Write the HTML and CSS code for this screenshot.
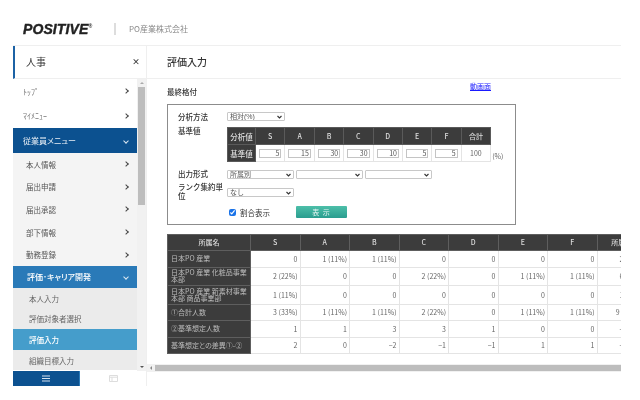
FILE: index.html
```html
<!DOCTYPE html>
<html lang="ja">
<head>
  <meta charset="UTF-8">
  <title>評価入力</title>
  <link rel="stylesheet" href="styles.css">
</head>
<body>
  <div class="page">
    <header class="topbar">
      <span class="logo">POSITIVE<sup>®</sup></span>
      <span class="company">PO産業株式会社</span>
    </header>

    <div class="main">
      <aside class="sidebar">
        <div class="side-title"><span>人事</span><span class="close">×</span></div>
        <div class="side-body">
          <ul class="menu">
            <li class="item top">ﾄｯﾌﾟ<i class="arrow"></i></li>
            <li class="item top">ﾏｲﾒﾆｭｰ<i class="arrow"></i></li>
            <li class="item head">従業員メニュー<i class="arrow down"></i></li>
            <li class="item sub">本人情報<i class="arrow"></i></li>
            <li class="item sub">届出申請<i class="arrow"></i></li>
            <li class="item sub">届出承認<i class="arrow"></i></li>
            <li class="item sub">部下情報<i class="arrow"></i></li>
            <li class="item sub">勤務登録<i class="arrow"></i></li>
            <li class="item head2">評価･キャリア開発<i class="arrow down"></i></li>
            <li class="item leaf">本人入力</li>
            <li class="item leaf">評価対象者選択</li>
            <li class="item leaf current">評価入力</li>
            <li class="item leaf">組織目標入力</li>
          </ul>
          <div class="vscroll">
            <span class="vup"></span>
            <span class="vthumb"></span>
            <span class="vdown"></span>
          </div>
        </div>
        <div class="side-tabs">
          <div class="tab active">
            <svg width="8" height="7" viewBox="0 0 8 7"><path d="M0 1h8M0 3.5h8M0 6h8" stroke="#d5e2ee" stroke-width="1.2"/></svg>
          </div>
          <div class="tab">
            <svg width="9" height="7" viewBox="0 0 9 7"><path d="M.5.5h8v6h-8zM.5 2.2h8M3 2.2v4.3" fill="none" stroke="#ddd" stroke-width="1"/></svg>
          </div>
        </div>
      </aside>

      <section class="content">
        <h2 class="page-title">評価入力</h2>
        <div class="scroll-area">
          <div class="sub-head">
            <span class="grade-title">最終格付</span>
            <a class="video-link" href="#">動画面</a>
          </div>

          <div class="filter-box">
            <div class="field">
              <label>分析方法</label>
              <select class="sel-short"><option>相対(%)</option></select>
            </div>
            <div class="field base">
              <label>基準値</label>
              <div class="base-wrap">
                <table class="base-table">
                  <tr>
                    <th class="name">分析値</th><th>S</th><th>A</th><th>B</th><th>C</th><th>D</th><th>E</th><th>F</th><th>合計</th>
                  </tr>
                  <tr>
                    <th class="name">基準値</th>
                    <td><input value="5"></td>
                    <td><input value="15"></td>
                    <td><input value="30"></td>
                    <td><input value="30"></td>
                    <td><input value="10"></td>
                    <td><input value="5"></td>
                    <td><input value="5"></td>
                    <td class="sum">100</td>
                  </tr>
                </table>
                <span class="unit">(%)</span>
              </div>
            </div>
            <div class="field output">
              <label>出力形式</label>
              <select class="sel-long"><option>所属別</option></select>
              <select class="sel-long"><option></option></select>
              <select class="sel-long"><option></option></select>
            </div>
            <div class="field rank">
              <label>ランク集約単位</label>
              <select class="sel-long"><option>なし</option></select>
            </div>
            <div class="field actions">
              <label class="check"><input type="checkbox" checked>割合表示</label>
              <button class="show-btn">表 示</button>
            </div>
          </div>

          <div class="result-wrap">
            <table class="result">
              <colgroup>
                <col class="col-name"><col><col><col><col><col><col><col><col>
              </colgroup>
              <tr class="r-head">
                <th>所属名</th><th>S</th><th>A</th><th>B</th><th>C</th><th>D</th><th>E</th><th>F</th><th>所属計</th>
              </tr>
              <tr class="r1">
                <th>日本PO 産業</th><td>0</td><td>1 (11%)</td><td>1 (11%)</td><td>0</td><td>0</td><td>0</td><td>0</td><td>2 (22%)</td>
              </tr>
              <tr class="r2">
                <th>日本PO 産業 化粧品事業本部</th><td>2 (22%)</td><td>0</td><td>0</td><td>2 (22%)</td><td>0</td><td>1 (11%)</td><td>1 (11%)</td><td>6 (67%)</td>
              </tr>
              <tr class="r2">
                <th>日本PO 産業 新素材事業本部 商品事業部</th><td>1 (11%)</td><td>0</td><td>0</td><td>0</td><td>0</td><td>0</td><td>0</td><td>1 (11%)</td>
              </tr>
              <tr class="r1">
                <th>①合計人数</th><td>3 (33%)</td><td>1 (11%)</td><td>1 (11%)</td><td>2 (22%)</td><td>0</td><td>1 (11%)</td><td>1 (11%)</td><td>9 (100%)</td>
              </tr>
              <tr class="r1">
                <th>②基準想定人数</th><td>1</td><td>1</td><td>3</td><td>3</td><td>1</td><td>0</td><td>0</td><td class="dash">−</td>
              </tr>
              <tr class="r1">
                <th>基準想定との差異①-②</th><td>2</td><td>0</td><td>−2</td><td>−1</td><td>−1</td><td>1</td><td>1</td><td class="dash">−</td>
              </tr>
            </table>
          </div>
        </div>
        <div class="hscroll">
          <span class="hleft"></span>
          <span class="hthumb"></span>
        </div>
      </section>
    </div>
  </div>
</body>
</html>
```

FILE: styles.css
```css
* {
  box-sizing: border-box;
}

html, body {
  height: 100%;
}

body {
  margin: 0;
  background-color: #fff;
  color: #444;
  font-family: "Noto Sans CJK JP", "Liberation Sans", sans-serif;
  font-size: 8px;
  font-feature-settings: "palt";
  overflow: hidden;
}

.page {
  width: 608px;
  margin-left: 13px;
  filter: blur(0.3px);
}

/* Top bar */
.topbar {
  height: 45px;
  padding: 21px 0 0 10px;
  display: flex;
  align-items: flex-start;
}

.logo {
  width: 91px;
  height: 16px;
  font-family: "Liberation Sans", sans-serif;
  font-size: 14px;
  line-height: 16px;
  font-weight: bold;
  font-style: italic;
  color: #222;
  letter-spacing: 0.1px;
  -webkit-text-stroke: 0.4px #222;
}

.logo sup {
  font-size: 5px;
  line-height: 0;
  vertical-align: 6px;
  -webkit-text-stroke: 0;
}

.company {
  margin-top: 2px;
  padding-left: 13px;
  height: 12px;
  border-left: 2px solid #ddd;
  font-size: 8px;
  line-height: 12px;
  color: #888;
  font-feature-settings: normal;
}

.main {
  display: flex;
  height: 341px;
  border-top: 1px solid #efefef;
}

/* Sidebar */
.sidebar {
  width: 134px;
  flex-shrink: 0;
  border-right: 1px solid #efefef;
  display: flex;
  flex-direction: column;
}

.side-title {
  height: 33px;
  flex-shrink: 0;
  border-left: 2px solid #1c62a5;
  border-bottom: 1px solid #efefef;
  padding: 0 6px 1px 11px;
  display: flex;
  justify-content: space-between;
  align-items: center;
  font-size: 10px;
  color: #333;
  font-feature-settings: normal;
}

.close {
  font-size: 8px;
  font-weight: bold;
}

.side-body {
  height: 292px;
  display: flex;
}

.menu {
  list-style: none;
  margin: 0;
  padding: 0;
  width: 125px;
  overflow: hidden;
}

.item {
  display: flex;
  justify-content: space-between;
  align-items: center;
  padding: 0 9px 0 10px;
  font-size: 7.5px;
  color: #555;
}

.arrow {
  width: 4px;
  height: 4px;
  border-top: 1.3px solid #444;
  border-right: 1.3px solid #444;
  transform: rotate(45deg);
}

.arrow.down {
  border-color: #dde8f2;
  transform: rotate(135deg);
}

.top {
  height: 24.5px;
  font-size: 8px;
  font-feature-settings: normal;
  color: #777;
}

.head {
  height: 25px;
  background-color: #0c5190;
  color: #e8eef5;
  font-size: 8px;
}

.sub {
  height: 22.6px;
  background-color: #f4f4f4;
  padding-left: 13px;
}

.head2 {
  height: 22px;
  background-color: #2a7ab8;
  padding-left: 14px;
  color: #fff;
  font-size: 8px;
  font-weight: 500;
}

.leaf {
  height: 20.6px;
  background-color: #ebebeb;
  padding-left: 16px;
  color: #666;
}

.leaf.current {
  background-color: #459dcb;
  color: #fff;
  font-weight: 500;
}

.vscroll {
  width: 9px;
  background-color: #f1f1f1;
  display: flex;
  flex-direction: column;
  align-items: center;
}

.vup, .vdown {
  width: 0;
  height: 0;
  flex-shrink: 0;
  border-left: 2px solid transparent;
  border-right: 2px solid transparent;
}

.vup {
  margin: 3px 0;
  border-bottom: 2px solid #aaa;
}

.vthumb {
  width: 7px;
  height: 118px;
  background-color: #bdbdbd;
}

.vdown {
  margin-top: auto;
  margin-bottom: 3px;
  border-top: 2px solid #555;
}

.side-tabs {
  height: 15px;
  display: flex;
}

.tab {
  flex: 1;
  display: flex;
  justify-content: center;
  align-items: center;
}

.tab.active {
  background-color: #0c5190;
  border-right: 1px solid #2a7ab8;
}

/* Content */
.content {
  flex: 1;
  min-width: 0;
  display: flex;
  flex-direction: column;
}

.page-title {
  margin: 0;
  height: 33px;
  flex-shrink: 0;
  padding-left: 20px;
  border-bottom: 1px solid #efefef;
  font-size: 10px;
  font-weight: 500;
  line-height: 32px;
  color: #333;
  font-feature-settings: normal;
}

.scroll-area {
  height: 284px;
  padding-left: 20px;
  overflow: hidden;
}

.sub-head {
  height: 25px;
  display: flex;
  justify-content: space-between;
  width: 324px;
}

.grade-title {
  margin-top: 8px;
  font-size: 7.5px;
  line-height: 10px;
  font-weight: 500;
  color: #333;
}

.video-link {
  margin-top: 2px;
  font-size: 7px;
  line-height: 10px;
  color: #1a1aff;
}

.filter-box {
  width: 349px;
  height: 121px;
  border: 1px solid #8c8c8c;
  padding: 7px 0 0 10px;
}

.field {
  display: flex;
  align-items: flex-start;
}

.field label {
  width: 49px;
  flex-shrink: 0;
  font-size: 7.5px;
  line-height: 9px;
  font-weight: 500;
  color: #333;
  font-feature-settings: normal;
}

.field select {
  appearance: none;
  height: 9px;
  padding: 0 0 0 2px;
  font-family: "Liberation Sans", "Noto Sans CJK JP", sans-serif;
  font-size: 7px;
  line-height: 7px;
  color: #555;
  background: #fff url("data:image/svg+xml,%3Csvg xmlns='http://www.w3.org/2000/svg' width='5' height='4'%3E%3Cpath d='M.5 1l2 2 2-2' fill='none' stroke='%23333' stroke-width='1.1'/%3E%3C/svg%3E") no-repeat right 2px center;
  border: 1px solid #c8c8c8;
  border-radius: 1px;
}

.sel-short {
  width: 58px;
}

.sel-long {
  width: 67px;
  margin-right: 2px;
}

.base {
  margin-top: 6px;
}

.base label {
  margin-top: -1px;
}

.base-wrap {
  display: flex;
  align-items: flex-end;
}

.base-table {
  border-collapse: collapse;
  table-layout: fixed;
  width: 263px;
}

.base-table th {
  height: 17px;
  padding: 0;
  width: 29.4px;
  background-color: #3c3c3c;
  border: 1px solid #5a5a5a;
  color: #ddd;
  font-size: 7px;
  font-weight: 500;
}

.base-table th.name {
  width: 28px;
  font-size: 7.5px;
}

.base-table td {
  height: 16px;
  padding: 0 3px;
  border: 1px solid #e4e4e4;
}

.base-table input {
  display: block;
  width: 100%;
  height: 9px;
  padding: 0 1px;
  border: 1px solid #c4c4c4;
  font-family: inherit;
  font-size: 7px;
  text-align: right;
  color: #555;
}

.base-table .sum {
  text-align: center;
  font-size: 7px;
  color: #666;
}

.unit {
  margin-left: 1px;
  margin-bottom: 1px;
  font-size: 7px;
  color: #666;
}

.output {
  margin-top: 8px;
}

.output label {
  margin-top: -1px;
}

.rank {
  margin-top: 3px;
}

.rank select {
  margin-top: 6px;
}

.actions {
  margin-top: 6px;
  align-items: center;
  padding-left: 51px;
}

.field .check {
  width: 67px;
  display: flex;
  align-items: center;
  gap: 4px;
  font-weight: normal;
}

.check input {
  width: 7px;
  height: 7px;
  margin: 0;
  accent-color: #1a73e8;
}

.show-btn {
  width: 51px;
  height: 12px;
  padding: 0;
  border: none;
  border-radius: 1px;
  background: linear-gradient(#4dbfa9, #2a9d8f);
  font-family: inherit;
  font-size: 7px;
  letter-spacing: 1px;
  color: #e6f5f2;
}

.result-wrap {
  margin-top: 9px;
  overflow: hidden;
}

.result {
  border-collapse: collapse;
  table-layout: fixed;
  width: 480px;
}

.result .col-name {
  width: 83px;
}

.result th {
  padding: 0 3px;
  background-color: #3c3c3c;
  border: 1px solid #5e5e5e;
  color: #bbb;
  font-size: 7px;
  line-height: 7px;
  font-weight: normal;
  text-align: left;
}

.result .r-head th {
  text-align: center;
  color: #ddd;
  font-weight: 500;
}

.result td {
  padding: 0 2px 0 0;
  border: 1px solid #e4e4e4;
  font-size: 7px;
  text-align: right;
  color: #666;
}

.result .dash {
  padding-left: 22px;
  text-align: left;
}

.r-head {
  height: 16px;
}

.r1 {
  height: 16.5px;
}

.r2 {
  height: 18.5px;
}

.hscroll {
  height: 8px;
  margin-top: 1px;
  display: flex;
  align-items: center;
  background-color: #f1f1f1;
}

.hleft {
  width: 0;
  height: 0;
  margin: 0 3px;
  border-top: 2px solid transparent;
  border-bottom: 2px solid transparent;
  border-right: 2px solid #888;
}

.hthumb {
  flex: 1;
  height: 6px;
  background-color: #bdbdbd;
}
```
